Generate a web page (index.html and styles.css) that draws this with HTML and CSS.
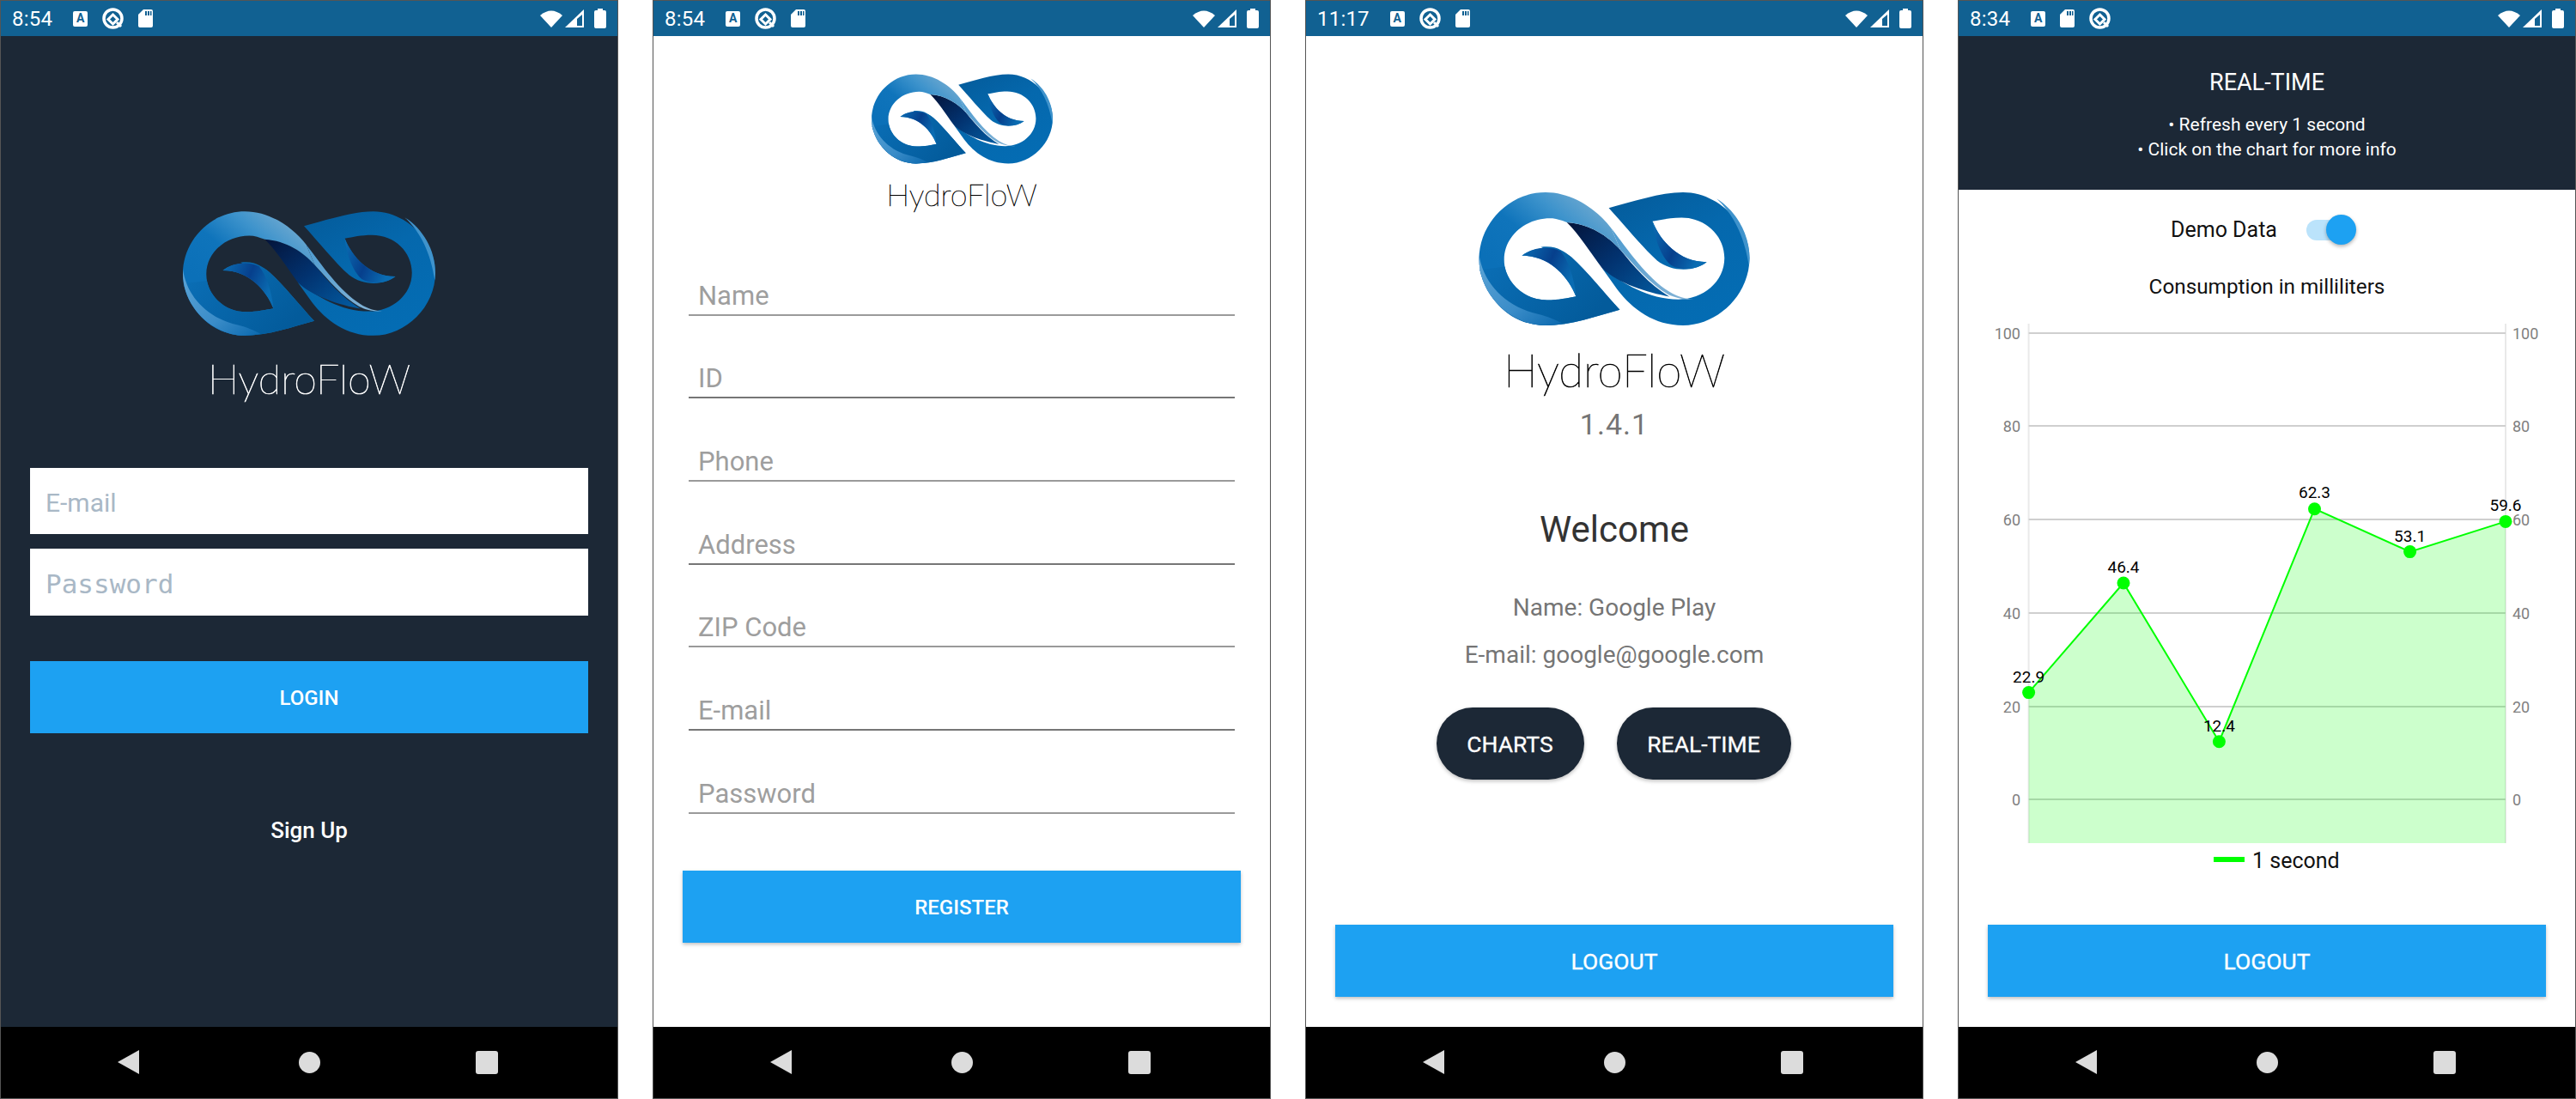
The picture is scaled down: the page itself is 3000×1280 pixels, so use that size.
FILE: index.html
```html
<!DOCTYPE html>
<html lang="en">
<head>
<meta charset="utf-8">
<title>HydroFloW</title>
<link rel="stylesheet" href="styles.css">
</head>
<body>
<svg class="defs" width="0" height="0" aria-hidden="true">
  <defs>
    <linearGradient id="gLeft" x1="0.75" y1="0" x2="0.2" y2="0.62">
      <stop offset="0" stop-color="#6fa9d0"/>
      <stop offset="0.3" stop-color="#3d93cc"/>
      <stop offset="0.62" stop-color="#0f74bb"/>
      <stop offset="1" stop-color="#0b70b8"/>
    </linearGradient>
    <linearGradient id="gLow" x1="0" y1="0" x2="1" y2="0.5">
      <stop offset="0" stop-color="#0b70b8"/>
      <stop offset="1" stop-color="#035b9b"/>
    </linearGradient>
    <linearGradient id="gCres" x1="0" y1="0" x2="1" y2="1">
      <stop offset="0" stop-color="#5ea5d6"/>
      <stop offset="0.6" stop-color="#3a8cc8"/>
      <stop offset="1" stop-color="#0a68ae"/>
    </linearGradient>
    <linearGradient id="gRight" x1="0" y1="0" x2="0.6" y2="1">
      <stop offset="0" stop-color="#045a99"/>
      <stop offset="0.5" stop-color="#0568ad"/>
      <stop offset="1" stop-color="#046cb3"/>
    </linearGradient>
    <linearGradient id="gDark" x1="0" y1="0" x2="1" y2="0.9">
      <stop offset="0" stop-color="#04143a"/>
      <stop offset="0.5" stop-color="#02326f"/>
      <stop offset="1" stop-color="#035a9f"/>
    </linearGradient>
    <linearGradient id="gLeaf" x1="0" y1="0" x2="1" y2="0.4">
      <stop offset="0" stop-color="#0b6fb5"/>
      <stop offset="0.55" stop-color="#063f8c"/>
      <stop offset="1" stop-color="#0a6cb2"/>
    </linearGradient>
    <linearGradient id="gStrip" x1="0" y1="0" x2="1" y2="1">
      <stop offset="0" stop-color="#4d9bd0"/>
      <stop offset="1" stop-color="#86b4d6"/>
    </linearGradient>
    <symbol id="logo" viewBox="68 47 884 435">
      <path fill="url(#gRight)" d="M492,98 C570,78 660,47 735,47 C850,47 952,150 952,262 C952,380 850,482 735,482 C640,482 570,430 520,365 L470,295 C540,345 620,397 720,397 C800,397 870,340 870,262 C870,190 810,130 730,130 C690,130 665,137 635,142 C660,205 720,275 812,275 C775,305 700,310 650,270 C600,225 540,150 492,98Z"/>
      <path fill="#3f93cc" d="M845,68 C905,105 952,180 952,262 C952,270 951,280 950,288 C935,190 900,120 845,68Z"/>
      <path fill="url(#gDark)" d="M355,145 C430,150 490,190 530,235 C575,290 620,345 690,388 C620,375 520,345 470,295 C430,240 395,185 355,145Z"/>
      <path fill="url(#gLeft)" d="M528,431 C450,452 370,482 285,482 C170,482 68,380 68,265 C68,150 165,47 285,47 C370,47 450,99 500,164 L530,235 C490,190 430,150 355,145 C335,138 320,132 300,132 C220,132 150,190 150,267 C150,339 210,399 290,399 C330,399 355,392 385,387 C360,324 300,254 208,254 C245,224 320,219 370,259 C420,304 480,379 528,431Z"/>
      <path fill="url(#gLow)" d="M152,290 C165,350 220,399 290,399 C330,399 355,392 385,387 C365,330 320,250 270,226 C320,219 345,240 370,259 C420,304 480,379 528,431 C450,452 370,482 285,482 C180,482 100,410 70,300Z"/>
      <path fill="url(#gCres)" d="M68,250 C80,340 150,420 260,445 C290,452 320,465 340,476 C320,480 300,482 285,482 C170,482 68,380 68,265Z"/>
      <path fill="url(#gLeaf)" d="M385,387 C360,324 300,254 208,254 C245,224 300,222 335,240 C360,270 380,330 385,387Z"/>
      <path fill="url(#gLeaf)" d="M635,142 C660,205 720,275 812,275 C780,300 730,305 695,285 C660,255 640,190 635,142Z"/>
      <path fill="url(#gStrip)" d="M500,164 C555,235 615,325 690,372 C715,388 745,397 770,397 C735,399 705,390 685,380 C625,345 580,290 530,235Z"/>
    </symbol>
  </defs>
</svg>

<main class="board">

  <section class="phone phone-dark">
    <header class="status">
      <span class="time">8:54</span>
      <span class="ic-a">A</span>
      <svg class="ic-q" viewBox="0 0 25 25"><circle cx="12.5" cy="12.5" r="10.5"/><path d="M12.5 8 L18 13.5 L12.5 19 L7 13.5Z"/><path d="M17 17 L22 22"/></svg>
      <svg class="ic-sd" viewBox="0 0 17 21"><path d="M6 0 H15 Q17 0 17 2 V19 Q17 21 15 21 H2 Q0 21 0 19 V6Z"/><path class="cut" d="M8 2h2v5H8zM11 2h2v5h-2zM14 2h1.500v5H14z"/></svg>
      <span class="spacer"></span>
      <svg class="ic-wifi" viewBox="0 0 26 21"><path d="M0 7 Q13 -4 26 7 L13 21Z"/></svg>
      <svg class="ic-signal" viewBox="0 0 22 21"><path d="M0 21 L22 0 V21Z"/><path class="cut" d="M14 11 L20 6 V19 H14Z"/></svg>
      <svg class="ic-batt" viewBox="0 0 14 23"><path d="M4 0 H10 V2 H12 Q14 2 14 4 V21 Q14 23 12 23 H2 Q0 23 0 21 V4 Q0 2 2 2 H4Z"/></svg>
    </header>
    <div class="screen login">
      <svg class="logo logo-lg"><use href="#logo"/></svg>
      <div class="brand brand-lg">HydroFloW</div>
      <div class="box-input first">E-mail</div>
      <div class="box-input second mono">Password</div>
      <div class="btn btn-login">LOGIN</div>
      <div class="signup">Sign Up</div>
    </div>
    <nav class="nav">
      <svg class="nav-back" viewBox="0 0 25 28"><path d="M25 0 V28 L0 14Z"/></svg>
      <span class="nav-home"></span>
      <span class="nav-recent"></span>
    </nav>
  </section>

  <section class="phone">
    <header class="status">
      <span class="time">8:54</span>
      <span class="ic-a">A</span>
      <svg class="ic-q" viewBox="0 0 25 25"><circle cx="12.5" cy="12.5" r="10.5"/><path d="M12.5 8 L18 13.5 L12.5 19 L7 13.5Z"/><path d="M17 17 L22 22"/></svg>
      <svg class="ic-sd" viewBox="0 0 17 21"><path d="M6 0 H15 Q17 0 17 2 V19 Q17 21 15 21 H2 Q0 21 0 19 V6Z"/><path class="cut" d="M8 2h2v5H8zM11 2h2v5h-2zM14 2h1.500v5H14z"/></svg>
      <span class="spacer"></span>
      <svg class="ic-wifi" viewBox="0 0 26 21"><path d="M0 7 Q13 -4 26 7 L13 21Z"/></svg>
      <svg class="ic-signal" viewBox="0 0 22 21"><path d="M0 21 L22 0 V21Z"/><path class="cut" d="M14 11 L20 6 V19 H14Z"/></svg>
      <svg class="ic-batt" viewBox="0 0 14 23"><path d="M4 0 H10 V2 H12 Q14 2 14 4 V21 Q14 23 12 23 H2 Q0 23 0 21 V4 Q0 2 2 2 H4Z"/></svg>
    </header>
    <div class="screen register">
      <svg class="logo logo-sm"><use href="#logo"/></svg>
      <div class="brand brand-sm">HydroFloW</div>
      <div class="fields">
        <div class="field">Name</div>
        <div class="field strong">ID</div>
        <div class="field">Phone</div>
        <div class="field strong">Address</div>
        <div class="field">ZIP Code</div>
        <div class="field strong">E-mail</div>
        <div class="field">Password</div>
      </div>
      <div class="btn btn-register">REGISTER</div>
    </div>
    <nav class="nav">
      <svg class="nav-back" viewBox="0 0 25 28"><path d="M25 0 V28 L0 14Z"/></svg>
      <span class="nav-home"></span>
      <span class="nav-recent"></span>
    </nav>
  </section>

  <section class="phone">
    <header class="status">
      <span class="time">11:17</span>
      <span class="ic-a">A</span>
      <svg class="ic-q" viewBox="0 0 25 25"><circle cx="12.5" cy="12.5" r="10.5"/><path d="M12.5 8 L18 13.5 L12.5 19 L7 13.5Z"/><path d="M17 17 L22 22"/></svg>
      <svg class="ic-sd" viewBox="0 0 17 21"><path d="M6 0 H15 Q17 0 17 2 V19 Q17 21 15 21 H2 Q0 21 0 19 V6Z"/><path class="cut" d="M8 2h2v5H8zM11 2h2v5h-2zM14 2h1.500v5H14z"/></svg>
      <span class="spacer"></span>
      <svg class="ic-wifi" viewBox="0 0 26 21"><path d="M0 7 Q13 -4 26 7 L13 21Z"/></svg>
      <svg class="ic-signal" viewBox="0 0 22 21"><path d="M0 21 L22 0 V21Z"/><path class="cut" d="M14 11 L20 6 V19 H14Z"/></svg>
      <svg class="ic-batt" viewBox="0 0 14 23"><path d="M4 0 H10 V2 H12 Q14 2 14 4 V21 Q14 23 12 23 H2 Q0 23 0 21 V4 Q0 2 2 2 H4Z"/></svg>
    </header>
    <div class="screen welcome">
      <svg class="logo logo-xl"><use href="#logo"/></svg>
      <div class="brand brand-xl">HydroFloW</div>
      <div class="version">1.4.1</div>
      <div class="hello">Welcome</div>
      <div class="info info-name">Name: Google Play</div>
      <div class="info info-mail">E-mail: google@google.com</div>
      <div class="pills">
        <div class="pill pill-charts">CHARTS</div>
        <div class="pill pill-rt">REAL-TIME</div>
      </div>
      <div class="btn btn-logout welcome-logout">LOGOUT</div>
    </div>
    <nav class="nav">
      <svg class="nav-back" viewBox="0 0 25 28"><path d="M25 0 V28 L0 14Z"/></svg>
      <span class="nav-home"></span>
      <span class="nav-recent"></span>
    </nav>
  </section>

  <section class="phone">
    <header class="status">
      <span class="time">8:34</span>
      <span class="ic-a">A</span>
      <svg class="ic-sd" viewBox="0 0 17 21"><path d="M6 0 H15 Q17 0 17 2 V19 Q17 21 15 21 H2 Q0 21 0 19 V6Z"/><path class="cut" d="M8 2h2v5H8zM11 2h2v5h-2zM14 2h1.500v5H14z"/></svg>
      <svg class="ic-q" viewBox="0 0 25 25"><circle cx="12.5" cy="12.5" r="10.5"/><path d="M12.5 8 L18 13.5 L12.5 19 L7 13.5Z"/><path d="M17 17 L22 22"/></svg>
      <span class="spacer"></span>
      <svg class="ic-wifi" viewBox="0 0 26 21"><path d="M0 7 Q13 -4 26 7 L13 21Z"/></svg>
      <svg class="ic-signal" viewBox="0 0 22 21"><path d="M0 21 L22 0 V21Z"/><path class="cut" d="M14 11 L20 6 V19 H14Z"/></svg>
      <svg class="ic-batt" viewBox="0 0 14 23"><path d="M4 0 H10 V2 H12 Q14 2 14 4 V21 Q14 23 12 23 H2 Q0 23 0 21 V4 Q0 2 2 2 H4Z"/></svg>
    </header>
    <div class="screen realtime">
      <div class="rt-head">
        <div class="rt-title">REAL-TIME</div>
        <div class="rt-note rt-note-first">• Refresh every 1 second</div>
        <div class="rt-note">• Click on the chart for more info</div>
      </div>
      <div class="demo">
        <span class="demo-label">Demo Data</span>
        <span class="toggle"><span class="toggle-track"></span><span class="toggle-thumb"></span></span>
      </div>
      <div class="chart-title">Consumption in milliliters</div>
      <svg class="chart" viewBox="0 0 718 650">
        <g class="grid-v">
          <line x1="81.6" y1="7" x2="81.6" y2="612"/>
          <line x1="637" y1="7" x2="637" y2="612"/>
        </g>
        <g class="grid-h">
          <line x1="81.6" y1="18" x2="637" y2="18"/>
          <line x1="81.6" y1="126" x2="637" y2="126"/>
          <line x1="81.6" y1="235" x2="637" y2="235"/>
          <line x1="81.6" y1="344" x2="637" y2="344"/>
          <line x1="81.6" y1="453" x2="637" y2="453"/>
          <line x1="81.6" y1="561" x2="637" y2="561"/>
        </g>
        <g class="axis-l">
          <text x="72" y="24.500">100</text>
          <text x="72" y="132.500">80</text>
          <text x="72" y="241.500">60</text>
          <text x="72" y="350.500">40</text>
          <text x="72" y="459.500">20</text>
          <text x="72" y="567.500">0</text>
        </g>
        <g class="axis-r">
          <text x="645" y="24.500">100</text>
          <text x="645" y="132.500">80</text>
          <text x="645" y="241.500">60</text>
          <text x="645" y="350.500">40</text>
          <text x="645" y="459.500">20</text>
          <text x="645" y="567.500">0</text>
        </g>
        <path class="area" d="M81.6 436.600 L192 309 L303.400 493.700 L414.500 222.700 L525.600 272.600 L637 237.400 V612 H81.600Z"/>
        <path class="line" d="M81.6 436.600 L192 309 L303.400 493.700 L414.500 222.700 L525.600 272.600 L637 237.400"/>
        <g class="points">
          <circle cx="81.6" cy="436.6" r="7.5"/>
          <circle cx="192" cy="309" r="7.5"/>
          <circle cx="303.4" cy="493.7" r="7.5"/>
          <circle cx="414.5" cy="222.7" r="7.5"/>
          <circle cx="525.6" cy="272.6" r="7.5"/>
          <circle cx="637" cy="237.4" r="7.5"/>
        </g>
        <g class="values">
          <text x="81.6" y="425">22.9</text>
          <text x="192" y="297">46.4</text>
          <text x="303.4" y="482">12.4</text>
          <text x="414.5" y="210">62.3</text>
          <text x="525.6" y="261">53.1</text>
          <text x="637" y="225">59.6</text>
        </g>
        <rect class="legend-key" x="297" y="628" width="36" height="6"/>
        <text class="legend-text" x="342" y="641">1 second</text>
      </svg>
      <div class="btn btn-logout realtime-logout">LOGOUT</div>
    </div>
    <nav class="nav">
      <svg class="nav-back" viewBox="0 0 25 28"><path d="M25 0 V28 L0 14Z"/></svg>
      <span class="nav-home"></span>
      <span class="nav-recent"></span>
    </nav>
  </section>

</main>
</body>
</html>
```
FILE: styles.css
```css
* { box-sizing: border-box; }
html, body { margin: 0; padding: 0; background: #fff; }
body { font-family: Roboto, "Liberation Sans", sans-serif; overflow: hidden; }
.defs { position: absolute; }

.board { display: flex; gap: 40px; width: 3000px; height: 1280px; }

.phone {
  width: 720px;
  height: 1280px;
  border: 1px solid #555;
  display: flex;
  flex-direction: column;
  background: #fff;
}
.phone-dark { background: #1c2836; }

/* status bar */
.status {
  height: 41px;
  flex: none;
  background: #116192;
  color: #fff;
  display: flex;
  align-items: center;
  gap: 17px;
  padding: 0 13px;
}
.time { font-size: 24px; line-height: 30px; margin-right: 7px; letter-spacing: 0.2px; }
.ic-a {
  width: 17px;
  height: 18px;
  background: #fff;
  border-radius: 2px;
  color: #116192;
  font-size: 14px;
  line-height: 16px;
  font-weight: 700;
  text-align: center;
}
.ic-q { width: 25px; height: 25px; fill: #fff; stroke: #fff; }
.ic-q circle { fill: none; stroke-width: 3.5; }
.ic-q path:first-of-type { fill: none; stroke-width: 3; }
.ic-q path:last-of-type { stroke-width: 3; fill: none; }
.ic-sd { width: 17px; height: 21px; fill: #fff; }
.ic-sd .cut, .ic-signal .cut { fill: #116192; }
.spacer { flex: 1; }
.ic-wifi { width: 26px; height: 21px; fill: #fff; margin-right: -14px; }
.ic-signal { width: 22px; height: 21px; fill: #fff; margin-right: -5px; }
.ic-batt { width: 14px; height: 23px; fill: #fff; }

/* nav bar */
.nav {
  height: 83px;
  flex: none;
  background: #000;
  display: grid;
  grid-template-columns: 136px 25px 186px 25px 181px 26px;
  align-items: center;
  padding-bottom: 1px;
}
.nav-back { grid-column: 2; width: 25px; height: 28px; fill: #dcdcdc; }
.nav-home { grid-column: 4; width: 25px; height: 25px; border-radius: 50%; background: #dcdcdc; }
.nav-recent { grid-column: 6; width: 26px; height: 27px; border-radius: 3px; background: #dcdcdc; }

.screen { flex: 1; min-height: 0; display: flex; flex-direction: column; align-items: center; }

.logo { display: block; flex: none; }
.logo-lg { width: 294px; height: 145px; }
.logo-sm { width: 211px; height: 105px; margin-top: 44px; }
.logo-xl { width: 316px; height: 155px; margin-top: 182px; }

.brand { font-family: Lato, "Open Sans", sans-serif; font-weight: 100; text-align: center; color: #000; -webkit-text-stroke: 0.7px currentColor; }
.brand-lg { font-size: 48.5px; line-height: 60px; margin-top: 19px; color: #fff; }
.brand-sm { font-size: 36px; line-height: 44px; margin-top: 13px; -webkit-text-stroke-width: 0.5px; }
.brand-xl { font-size: 53px; line-height: 60px; margin-top: 22px; }

/* buttons */
.btn {
  width: 650px;
  height: 84px;
  flex: none;
  background: #1da1f2;
  color: #fff;
  font-weight: 500;
  font-size: 24px;
  display: flex;
  align-items: center;
  justify-content: center;
  padding-top: 2px;
  box-shadow: 0 2px 4px rgba(0, 0, 0, .25);
}
.btn-logout { font-size: 26.5px; font-weight: 400; padding-top: 0; -webkit-text-stroke: 0.3px currentColor; }

/* login */
.login .logo-lg { margin-top: 204px; }
.box-input {
  width: 650px;
  background: #fff;
  color: #a9b8c6;
  font-size: 30px;
  padding: 3px 0 0 18px;
  display: flex;
  align-items: center;
}
.box-input.first { height: 77px; margin-top: 75px; }
.box-input.second { height: 78px; margin-top: 17px; }
.mono { font-family: "DejaVu Sans Mono", "Liberation Mono", monospace; font-size: 31px; }
.btn-login { margin-top: 53px; box-shadow: none; }
.signup { margin-top: 93px; line-height: 40px; color: #fff; font-size: 26px; font-weight: 500; }

/* register */
.fields { width: 636px; margin-top: 23px; }
.field {
  height: 96.67px;
  display: flex;
  align-items: flex-end;
  padding: 0 0 1px 11px;
  border-bottom: 2px solid #9a9a9a;
  color: #9e9e9e;
  font-size: 31px;
  line-height: 40px;
}
.field.strong { border-bottom-color: #767676; }
.btn-register { margin-top: 66px; }

/* welcome */
.version { margin-top: 13px; line-height: 40px; font-size: 34px; color: #757575; letter-spacing: 1px; }
.hello { margin-top: 78px; line-height: 50px; font-size: 42px; color: #333; }
.info { line-height: 40px; font-size: 28px; color: #757575; }
.info-name { margin-top: 46px; }
.info-mail { margin-top: 15px; }
.pills { display: flex; gap: 38px; margin-top: 41px; margin-left: -2px; }
.pill {
  height: 84px;
  border-radius: 42px;
  background: #1c2836;
  color: #fff;
  font-size: 26.5px;
  font-weight: 400;
  -webkit-text-stroke: 0.3px currentColor;
  padding-top: 1px;
  display: flex;
  align-items: center;
  justify-content: center;
  box-shadow: 0 2px 4px rgba(0, 0, 0, .25);
}
.pill-charts { width: 172px; }
.pill-rt { width: 203px; }
.welcome-logout { margin-top: 169px; }

/* real-time */
.rt-head {
  width: 100%;
  height: 179px;
  flex: none;
  background: #1c2836;
  color: #fff;
  text-align: center;
  padding-top: 34px;
}
.rt-title { font-size: 27px; line-height: 40px; }
.rt-note { font-size: 21px; line-height: 29px; }
.rt-note-first { margin-top: 15px; }
.demo { display: flex; align-items: center; height: 40px; margin-top: 26px; margin-left: -8px; }
.demo-label { font-size: 25px; color: #111; }
.toggle { position: relative; width: 58px; height: 35px; margin-left: 34px; }
.toggle-track {
  position: absolute;
  left: 0;
  top: 6px;
  width: 52px;
  height: 24px;
  border-radius: 12px;
  background: #bbe3fb;
}
.toggle-thumb {
  position: absolute;
  left: 23px;
  top: 0;
  width: 35px;
  height: 35px;
  border-radius: 50%;
  background: #1da1f2;
  box-shadow: 0 2px 4px rgba(0, 0, 0, .3);
}
.chart-title { margin-top: 27px; line-height: 40px; font-size: 24.3px; color: #111; }
.chart { display: block; width: 718px; height: 650px; flex: none; margin-top: 16px; }
.grid-v line { stroke: #e9e9e9; stroke-width: 2; }
.grid-h line { stroke: #cfcfcf; stroke-width: 2; }
.axis-l text, .axis-r text { font-family: Roboto, sans-serif; font-size: 18px; fill: #808080; }
.axis-l text { text-anchor: end; }
.area { fill: rgba(0, 255, 0, .2); }
.line { fill: none; stroke: #00ff00; stroke-width: 2; }
.points circle { fill: #00ff00; }
.values text { font-family: Roboto, sans-serif; font-size: 19px; fill: #000; text-anchor: middle; }
.legend-key { fill: #00ff00; }
.legend-text { font-family: Roboto, sans-serif; font-size: 25px; fill: #111; }
.realtime-logout { margin-top: 57px; }
```
